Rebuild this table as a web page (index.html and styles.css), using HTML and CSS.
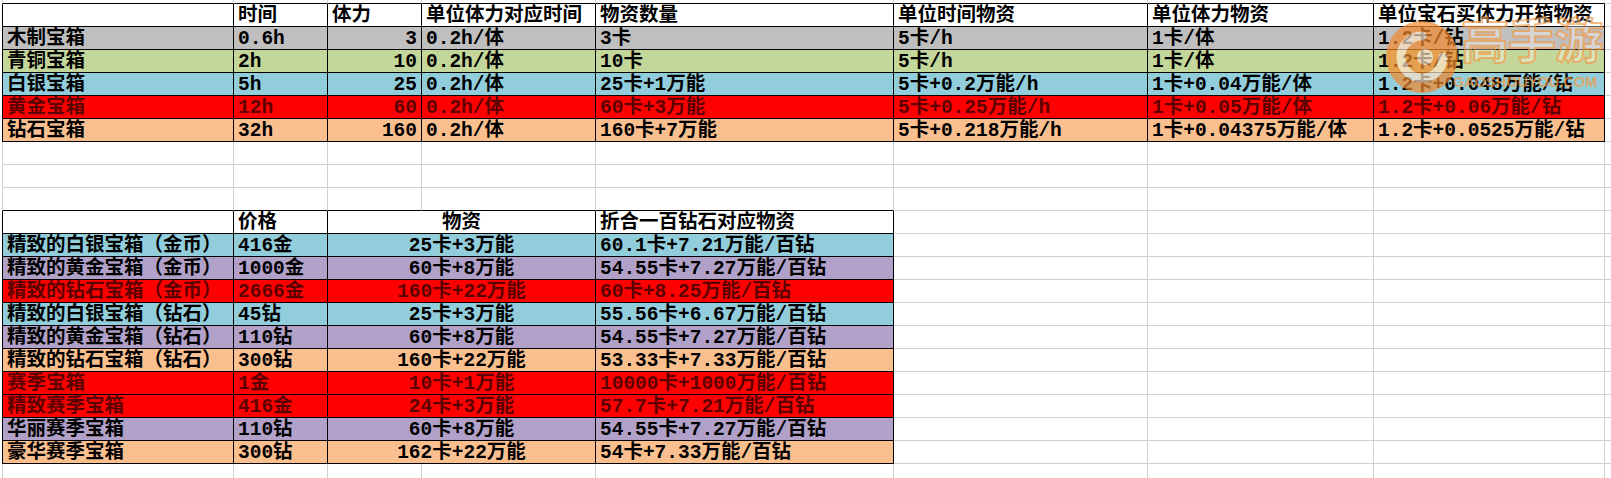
FILE: index.html
```html
<!DOCTYPE html>
<html lang="zh">
<head>
<meta charset="utf-8">
<title>宝箱物资对比</title>
<link rel="stylesheet" href="styles.css">
</head>
<body>
<div class="sheet">
  <!-- stub row above the first table -->
  <div class="c a kb s"></div><div class="c kb s"></div><div class="c kb s"></div><div class="c kb s"></div><div class="c kb s"></div><div class="c kb s"></div><div class="c kb s"></div><div class="c kb s"></div><div class="c s"></div>

  <!-- first table -->
  <div class="c a k"></div><div class="c k">时间</div><div class="c k">体力</div><div class="c k">单位体力对应时间</div><div class="c k">物资数量</div><div class="c k">单位时间物资</div><div class="c k">单位体力物资</div><div class="c k">单位宝石买体力开箱物资</div><div class="c"></div>

  <div class="c a k gy">木制宝箱</div><div class="c k gy">0.6h</div><div class="c k gy r">3</div><div class="c k gy">0.2h/体</div><div class="c k gy">3卡</div><div class="c k gy">5卡/h</div><div class="c k gy">1卡/体</div><div class="c k gy">1.2卡/钻</div><div class="c"></div>

  <div class="c a k gn">青铜宝箱</div><div class="c k gn">2h</div><div class="c k gn r">10</div><div class="c k gn">0.2h/体</div><div class="c k gn">10卡</div><div class="c k gn">5卡/h</div><div class="c k gn">1卡/体</div><div class="c k gn">1.2卡/钻</div><div class="c"></div>

  <div class="c a k bl">白银宝箱</div><div class="c k bl">5h</div><div class="c k bl r">25</div><div class="c k bl">0.2h/体</div><div class="c k bl">25卡+1万能</div><div class="c k bl">5卡+0.2万能/h</div><div class="c k bl">1卡+0.04万能/体</div><div class="c k bl">1.2卡+0.048万能/钻</div><div class="c"></div>

  <div class="c a k rd">黄金宝箱</div><div class="c k rd">12h</div><div class="c k rd r">60</div><div class="c k rd">0.2h/体</div><div class="c k rd">60卡+3万能</div><div class="c k rd">5卡+0.25万能/h</div><div class="c k rd">1卡+0.05万能/体</div><div class="c k rd">1.2卡+0.06万能/钻</div><div class="c"></div>

  <div class="c a k or">钻石宝箱</div><div class="c k or">32h</div><div class="c k or r">160</div><div class="c k or">0.2h/体</div><div class="c k or">160卡+7万能</div><div class="c k or">5卡+0.218万能/h</div><div class="c k or">1卡+0.04375万能/体</div><div class="c k or">1.2卡+0.0525万能/钻</div><div class="c"></div>

  <!-- empty rows -->
  <div class="c a"></div><div class="c"></div><div class="c"></div><div class="c"></div><div class="c"></div><div class="c"></div><div class="c"></div><div class="c"></div><div class="c"></div>
  <div class="c a"></div><div class="c"></div><div class="c"></div><div class="c"></div><div class="c"></div><div class="c"></div><div class="c"></div><div class="c"></div><div class="c"></div>
  <div class="c a kb"></div><div class="c kb"></div><div class="c kb"></div><div class="c kb"></div><div class="c kb"></div><div class="c"></div><div class="c"></div><div class="c"></div><div class="c"></div>

  <!-- second table -->
  <div class="c a k"></div><div class="c k">价格</div><div class="c k w2 m">物资</div><div class="c k">折合一百钻石对应物资</div><div class="c"></div><div class="c"></div><div class="c"></div><div class="c"></div>

  <div class="c a k bl">精致的白银宝箱（金币）</div><div class="c k bl">416金</div><div class="c k bl w2 m">25卡+3万能</div><div class="c k bl">60.1卡+7.21万能/百钻</div><div class="c"></div><div class="c"></div><div class="c"></div><div class="c"></div>

  <div class="c a k pu">精致的黄金宝箱（金币）</div><div class="c k pu">1000金</div><div class="c k pu w2 m">60卡+8万能</div><div class="c k pu">54.55卡+7.27万能/百钻</div><div class="c"></div><div class="c"></div><div class="c"></div><div class="c"></div>

  <div class="c a k rd">精致的钻石宝箱（金币）</div><div class="c k rd">2666金</div><div class="c k rd w2 m">160卡+22万能</div><div class="c k rd">60卡+8.25万能/百钻</div><div class="c"></div><div class="c"></div><div class="c"></div><div class="c"></div>

  <div class="c a k bl">精致的白银宝箱（钻石）</div><div class="c k bl">45钻</div><div class="c k bl w2 m">25卡+3万能</div><div class="c k bl">55.56卡+6.67万能/百钻</div><div class="c"></div><div class="c"></div><div class="c"></div><div class="c"></div>

  <div class="c a k pu">精致的黄金宝箱（钻石）</div><div class="c k pu">110钻</div><div class="c k pu w2 m">60卡+8万能</div><div class="c k pu">54.55卡+7.27万能/百钻</div><div class="c"></div><div class="c"></div><div class="c"></div><div class="c"></div>

  <div class="c a k or">精致的钻石宝箱（钻石）</div><div class="c k or">300钻</div><div class="c k or w2 m">160卡+22万能</div><div class="c k or">53.33卡+7.33万能/百钻</div><div class="c"></div><div class="c"></div><div class="c"></div><div class="c"></div>

  <div class="c a k rd">赛季宝箱</div><div class="c k rd">1金</div><div class="c k rd w2 m">10卡+1万能</div><div class="c k rd">10000卡+1000万能/百钻</div><div class="c"></div><div class="c"></div><div class="c"></div><div class="c"></div>

  <div class="c a k rd">精致赛季宝箱</div><div class="c k rd">416金</div><div class="c k rd w2 m">24卡+3万能</div><div class="c k rd">57.7卡+7.21万能/百钻</div><div class="c"></div><div class="c"></div><div class="c"></div><div class="c"></div>

  <div class="c a k pu">华丽赛季宝箱</div><div class="c k pu">110钻</div><div class="c k pu w2 m">60卡+8万能</div><div class="c k pu">54.55卡+7.27万能/百钻</div><div class="c"></div><div class="c"></div><div class="c"></div><div class="c"></div>

  <div class="c a k or">豪华赛季宝箱</div><div class="c k or">300钻</div><div class="c k or w2 m">162卡+22万能</div><div class="c k or">54卡+7.33万能/百钻</div><div class="c"></div><div class="c"></div><div class="c"></div><div class="c"></div>

  <!-- trailing empty row -->
  <div class="c a"></div><div class="c"></div><div class="c"></div><div class="c"></div><div class="c"></div><div class="c"></div><div class="c"></div><div class="c"></div><div class="c"></div>

  <!-- watermark -->
  <div class="wm" aria-hidden="true">
    <svg class="wm-logo" width="74" height="74" viewBox="0 0 74 74">
      <circle cx="37" cy="37" r="36" fill="#f28a2e"/>
      <path d="M37 16 A21 21 0 1 0 58 37" fill="none" stroke="#fde3c8" stroke-width="9" stroke-linecap="round"/>
      <circle cx="40" cy="37" r="8" fill="#fde3c8"/>
    </svg>
    <div class="wm-text">
      <div class="wm-cn">高手游</div>
      <div class="wm-en">GAOSHOUYOU.COM</div>
    </div>
  </div>
</div>
</body>
</html>
```

FILE: styles.css
```css
* { box-sizing: border-box; }

html, body {
  margin: 0;
  padding: 0;
  background: #ffffff;
  width: 1611px;
  height: 478px;
  overflow: hidden;
}

.sheet {
  position: relative;
  display: grid;
  grid-template-columns: 232px 94px 94px 174px 298px 254px 226px 231px 106px;
  grid-template-rows: 4px;
  grid-auto-rows: 23px;
  margin-left: 2px;
  width: 1709px;
  font-family: "Liberation Mono", "Noto Sans CJK SC", monospace;
  font-weight: 700;
  font-size: 19.5px;
  color: #000;
}

.c {
  border-right: 1px solid #d0d0d0;
  border-bottom: 1px solid #d0d0d0;
  padding: 1px 4px 0;
  line-height: 22px;
  white-space: nowrap;
  overflow: hidden;
  background: #fff;
}

.a { border-left: 1px solid #d0d0d0; }

.k { border-color: #000; }
.kb { border-bottom-color: #000; }

.s { line-height: 2px; padding: 0; }

.r { text-align: right; }
.m { text-align: center; }
.w2 { grid-column: span 2; }

.gy { background: #bfbfbf; }
.gn { background: #c4d79b; }
.bl { background: #92cddc; }
.or { background: #fabf8f; }
.pu { background: #b1a0c7; }
.rd { background: #ff0000; color: #5c0000; }

.wm {
  position: absolute;
  left: 1383px;
  top: 2px;
  display: flex;
  align-items: flex-start;
  gap: 0;
  opacity: 0.7;
  pointer-events: none;
}

.wm-logo { margin-top: 18px; display: block; }

.wm-text {
  display: flex;
  flex-direction: column;
  align-items: flex-start;
}

.wm-cn {
  font-family: "Noto Sans CJK SC", sans-serif;
  font-weight: 700;
  font-size: 48px;
  line-height: 70px;
  color: rgba(255, 255, 255, 0.5);
  -webkit-text-stroke: 2px #f0a050;
  letter-spacing: -1px;
  margin-left: 2px;
}

.wm-en {
  font-family: "Liberation Sans", sans-serif;
  font-weight: 700;
  font-size: 14.5px;
  line-height: 16px;
  color: #f39a40;
  margin-top: 2px;
  margin-left: -6px;
}
```
